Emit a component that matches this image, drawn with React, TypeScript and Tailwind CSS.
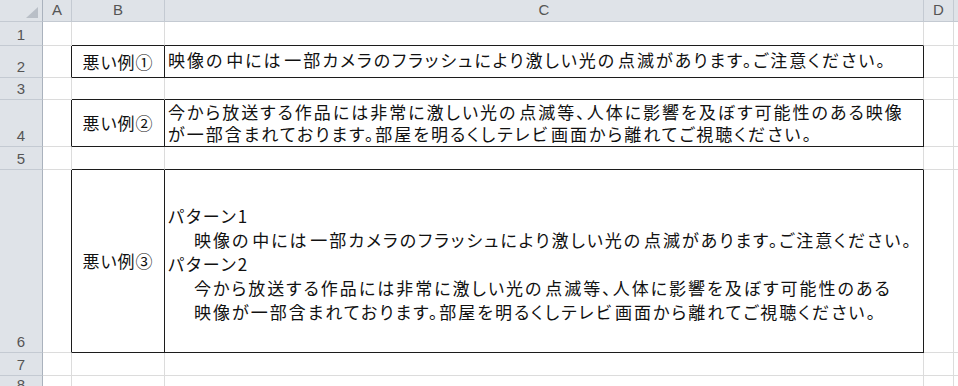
import React from 'react';

const HEAD = "bg-[#dfe3e8] border-r border-b border-[#c4cad2] flex items-center justify-center text-[15px] text-[#555] font-['Liberation_Sans',sans-serif]";
const JP = "font-['Noto_Sans_CJK_JP',sans-serif] [font-feature-settings:'palt'] text-[17px] text-[#111] whitespace-nowrap";

interface RowProps {
    n: number;
    boxed?: boolean;
    boxBelow?: boolean;
    label?: React.ReactNode;
    children?: React.ReactNode;
}

const Row: React.FC<RowProps> = ({ n, boxed, boxBelow, label, children }) => {
    const side = boxed ? 'border-r-[#1c1c1c]' : 'border-r-[#dcdcdc]';
    const bottom = boxed || boxBelow ? 'border-b-[#1c1c1c]' : 'border-b-[#dcdcdc]';
    return (
        <>
            <div className="bg-[#dfe3e8] border-r border-b border-r-[#aab2bd] border-b-[#c4cad2] flex items-end justify-center pb-[1px] text-[15px] leading-[18px] text-[#555] font-['Liberation_Sans',sans-serif]">
                {n}
            </div>
            <div className={`border-r border-b border-b-[#dcdcdc] ${side}`} />
            <div className={`border-r border-b ${side} ${bottom} flex items-center justify-center ${JP} tracking-[1px]`}>
                {label}
            </div>
            <div className={`border-r border-b ${side} ${bottom} flex flex-col justify-center pl-[3px] ${JP} tracking-[2px] [word-spacing:-4px]`}>
                {children}
            </div>
            <div className="border-r border-b border-[#dcdcdc]" />
            <div className="border-b border-[#dcdcdc]" />
        </>
    );
};

export default function App() {
    return (
        <div className="w-[958px] h-[386px] overflow-hidden bg-white grid grid-cols-[43px_29px_93px_759px_30px_1fr] grid-rows-[22px_24px_32px_22px_47px_23px_183px_23px_1fr]">
            <div className="bg-[#dfe3e8] border-r border-b border-r-[#aab2bd] border-b-[#c4cad2] flex items-end justify-end pr-[4px] pb-[3px]">
                <svg width="12" height="11" viewBox="0 0 12 11">
                    <polygon points="12,0 12,11 0,11" fill="#b9bfc7" />
                </svg>
            </div>
            <div className={HEAD}>A</div>
            <div className={HEAD}>B</div>
            <div className={HEAD}>C</div>
            <div className={HEAD}>D</div>
            <div className="bg-[#dfe3e8] border-b border-[#c4cad2]" />

            <Row n={1} boxBelow />
            <Row n={2} boxed label="悪い例①">
                <div className="-mt-[3px]">映像の 中には 一部カメラのフラッシュにより激しい光の 点滅があります。ご注意ください。</div>
            </Row>
            <Row n={3} boxBelow />
            <Row n={4} boxed label="悪い例②">
                <div className="leading-[22px]">
                    <div>今から放送する作品には非常に激しい光の 点滅等、人体に影響を及ぼす可能性のある映像</div>
                    <div>が一部含まれております。部屋を明るくしテレビ 画面から離れてご視聴ください。</div>
                </div>
            </Row>
            <Row n={5} boxBelow />
            <Row n={6} boxed label="悪い例③">
                <div className="leading-[24px] pt-[5px]">
                    <div>パターン1</div>
                    <div className="pl-[26px]">映像の 中には 一部カメラのフラッシュにより激しい光の 点滅があります。ご注意ください。</div>
                    <div>パターン2</div>
                    <div className="pl-[26px]">今から放送する作品には非常に激しい光の 点滅等、人体に影響を及ぼす可能性のある</div>
                    <div className="pl-[26px]">映像が一部含まれております。部屋を明るくしテレビ 画面から離れてご視聴ください。</div>
                </div>
            </Row>
            <Row n={7} />
            <Row n={8} />
        </div>
    );
}
